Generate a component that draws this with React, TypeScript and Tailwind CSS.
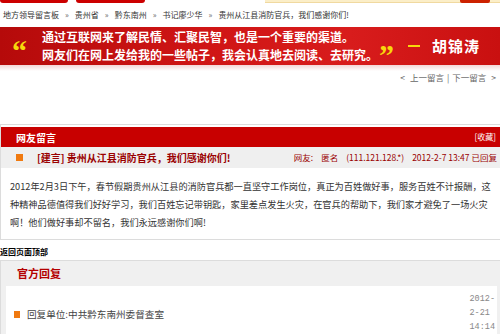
const Crumb = (props: { text: string; last?: boolean }) => {
    return (
        <>
            <span>{props.text}</span>
            {!props.last && <span className="mx-[6px] text-[#666]">»</span>}
        </>
    )
}

const OrangeSquare = (props: { size: string }) => {
    return <div className={`${props.size} bg-[#f07a10] shrink-0`} />
}

const App = () => {
    return (
        <div className="w-[500px] h-[334px] overflow-hidden bg-white font-['Noto_Sans_CJK_SC',sans-serif] text-[#333]">
            {/* top strip, mostly cut off */}
            <div className="flex h-[3px]">
                <div className="w-[68px] h-[3px] bg-[#cc0000] rounded-b-[3px]" />
                <div className="ml-[8px] w-[69px] h-[3px] bg-[#cc0000] rounded-b-[3px]" />
                <div className="ml-[120px] flex-1 h-[3px] bg-[#fbeec8] border-b border-[#f0d9a0] flex justify-end pr-[10px]">
                    <div className="w-[30px] h-[3px] bg-[#cc2200] rounded-b-[2px]" />
                </div>
            </div>

            {/* breadcrumb */}
            <div className="h-[24px] flex items-center pl-[3px] text-[8px] whitespace-nowrap">
                <Crumb text="地方领导留言板" />
                <Crumb text="贵州省" />
                <Crumb text="黔东南州" />
                <Crumb text="书记廖少华" />
                <Crumb text="贵州从江县消防官兵，我们感谢你们!" last />
            </div>

            {/* banner */}
            <div className="h-[38px] bg-[linear-gradient(90deg,#b50a0a_0%,#cf1515_40%,#d81c1c_70%,#c91010_100%)] flex items-center text-white">
                <span className="ml-[12px] w-[30px] text-[30px] leading-none font-bold text-[#f7d70c] font-['Liberation_Serif',serif] mt-[10px]">“</span>
                <div className="text-[12px] leading-[18px] font-bold whitespace-nowrap">
                    <div>通过互联网来了解民情、汇聚民智，也是一个重要的渠道。</div>
                    <div>网友们在网上发给我的一些帖子，我会认真地去阅读、去研究。</div>
                </div>
                <span className="ml-[1px] text-[30px] leading-none font-bold text-[#f7d70c] font-['Liberation_Serif',serif] mt-[18px]">”</span>
                <div className="ml-[14px] w-[12px] h-[2px] bg-[#f7d70c]" />
                <span className="ml-[12px] text-[15px] font-bold tracking-[1px]">胡锦涛</span>
            </div>
            <div className="h-[6px] bg-[linear-gradient(180deg,#f3d6d6,#ffffff)]" />

            {/* prev / next */}
            <div className="h-[13px] flex justify-end items-center pr-[4px] text-[8.5px] text-[#666] whitespace-nowrap">
                <span className="mr-[5px]">&lt;</span>
                <span>上一留言</span>
                <span className="mx-[3px]">|</span>
                <span>下一留言</span>
                <span className="ml-[5px]">&gt;</span>
            </div>

            {/* message panel */}
            <div className="mt-[40px] border-t border-l border-b border-[#dcdcdc] pt-[2px]">
                <div className="h-[20px] bg-[#c80000] flex items-center justify-between pl-[15px] pr-[4px] text-white">
                    <span className="text-[10px] font-bold">网友留言</span>
                    <span className="text-[8px]">[收藏]</span>
                </div>
                <div className="h-[21px] bg-[#efefef] flex items-center pl-[15px] pr-[3px] text-[#9a0000] whitespace-nowrap">
                    <OrangeSquare size="w-[7px] h-[7px]" />
                    <span className="ml-[14px] text-[10px] font-bold">[建言] 贵州从江县消防官兵，我们感谢你们!</span>
                    <span className="ml-auto text-[8.5px] flex gap-[8px]">
                        <span>网友:</span>
                        <span>匿名</span>
                        <span>(111.121.128.*)</span>
                        <span>2012-2-7 13:47</span>
                        <span className="-ml-[6px]">已回复</span>
                    </span>
                </div>
                <div className="pt-[9px] pb-[8px] pl-[9px] text-[9.2px] leading-[18px] whitespace-nowrap">
                    2012年2月3日下午，春节假期贵州从江县的消防官兵都一直坚守工作岗位，真正为百姓做好事，服务百姓不计报酬，这<br />
                    种精神品德值得我们好好学习，我们百姓忘记带钥匙，家里差点发生火灾，在官兵的帮助下，我们家才避免了一场火灾<br />
                    啊！他们做好事却不留名，我们永远感谢你们啊!
                </div>
            </div>

            <div className="mt-[6px] h-[12px] flex items-center text-[8px] font-bold text-black">返回页面顶部</div>

            {/* official reply */}
            <div className="mt-[2px] border-t border-l border-[#dcdcdc] bg-[#f0f0f0]">
                <div className="h-[25px] flex items-center pl-[16px]">
                    <span className="text-[11px] font-bold text-[#b40000]">官方回复</span>
                </div>
                <div className="ml-[5px] mr-[3px] bg-white h-[60px] flex items-start pt-[6px] pl-[8px] pr-[2px]">
                    <div className="flex items-center mt-[15px]">
                        <OrangeSquare size="w-[6px] h-[7px]" />
                        <span className="ml-[7px] text-[9.6px] text-[#444]">回复单位:中共黔东南州委督查室</span>
                    </div>
                    <div className="ml-auto flex flex-col text-[8.5px] leading-[14px] text-[#888] font-['Liberation_Mono',monospace]">
                        <span>2012-</span>
                        <span>2-21</span>
                        <span>14:14</span>
                    </div>
                </div>
            </div>
        </div>
    )
}

export default App
